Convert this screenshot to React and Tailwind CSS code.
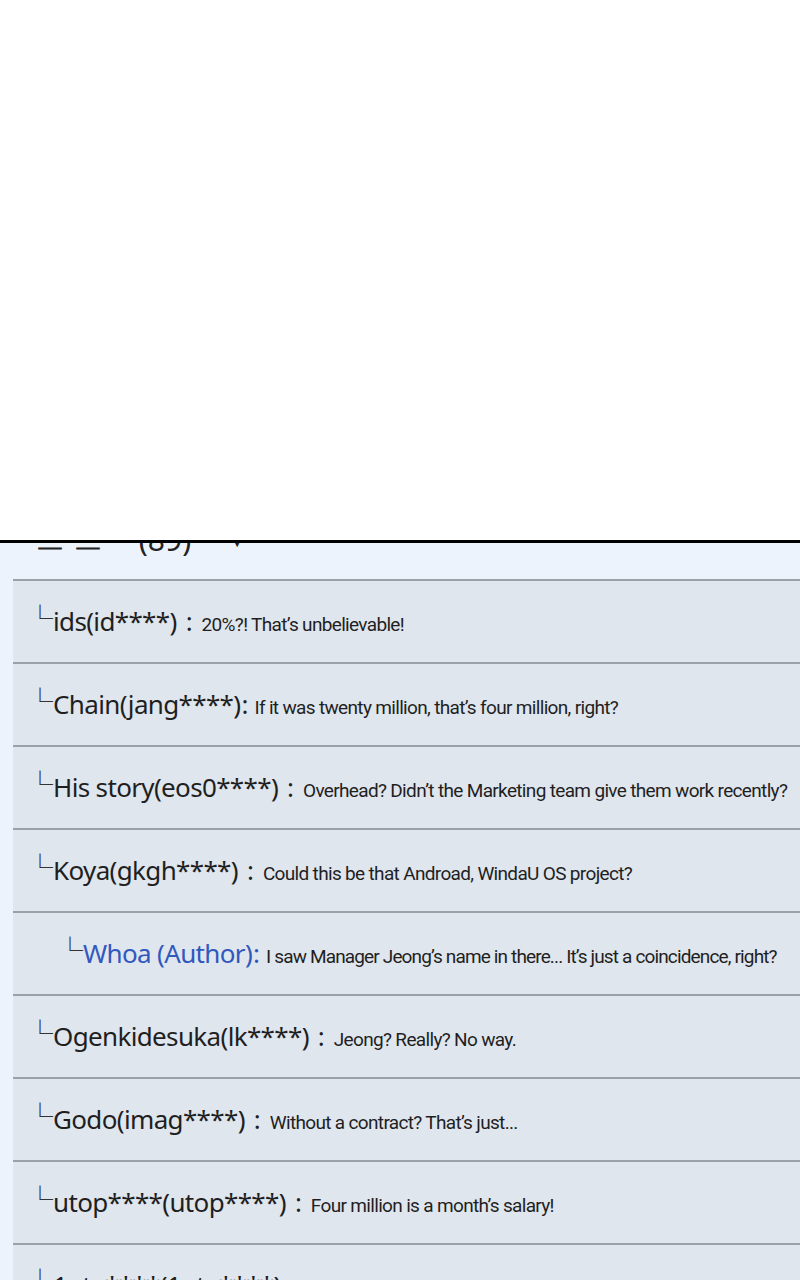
const comments = [
  { name: "ids(id****)", sep: "spaced", msg: "20%?! That’s unbelievable!" },
  { name: "Chain(jang****)", sep: "tight", msg: "If it was twenty million, that’s four million, right?" },
  { name: "His story(eos0****)", sep: "spaced", msg: "Overhead? Didn’t the Marketing team give them work recently?" },
  { name: "Koya(gkgh****)", sep: "spaced", msg: "Could this be that Androad, WindaU OS project?" },
  { name: "Whoa (Author)", sep: "tight", msg: "I saw Manager Jeong’s name in there... It’s just a coincidence, right?", author: true },
  { name: "Ogenkidesuka(lk****)", sep: "spaced", msg: "Jeong? Really? No way." },
  { name: "Godo(imag****)", sep: "spaced", msg: "Without a contract? That’s just..." },
  { name: "utop****(utop****)", sep: "spaced", msg: "Four million is a month’s salary!" },
  { name: "1ota****(1ota****)", sep: "spaced", msg: "" },
];

function Row({ c }) {
  const color = c.author ? "text-[#3158bd]" : "text-[#1f1f1f]";
  return (
    <div
      className={
        "h-[83px] border-t-2 border-[#9aa1a9] bg-[#dfe6ee] flex items-center whitespace-nowrap " +
        (c.author ? "pl-[44px]" : "pl-[14px]")
      }
    >
      <div className="flex items-baseline">
        <span className="text-[26px] leading-none text-[#333] font-['Noto_Sans_CJK_KR',sans-serif] relative top-[-3px]">
          └
        </span>
        <span className={"text-[26px] tracking-[-0.025em] font-['Noto_Sans',sans-serif] " + color}>
          {c.name}
        </span>
        <span
          className={
            "text-[26px] font-['Noto_Sans',sans-serif] " +
            color +
            (c.sep === "spaced" ? " ml-[9px] mr-[9px]" : " ml-[1px] mr-[6px]")
          }
        >
          :
        </span>
        <span
          className={
            "text-[19px] text-[#1f1f1f] font-['Roboto',sans-serif] " +
            (c.author ? "tracking-[-0.045em]" : "tracking-[-0.035em]")
          }
        >
          {c.msg}
        </span>
      </div>
    </div>
  );
}

export default function App() {
  return (
    <div className="w-[800px] h-[1280px] overflow-hidden bg-white">
      <div className="h-[540px] bg-white" />
      <div className="border-t-[3px] border-black bg-[#ecf3fc] pl-[13px]">
        <div className="h-[36px] overflow-hidden relative">
          <div className="absolute top-[-26px] left-[22px] flex items-center gap-[36px] text-[30px] text-[#222] font-['Noto_Sans',sans-serif] whitespace-nowrap">
            <span>ㅡ ㅡ</span>
            <span>(89)</span>
            <span className="text-[20px]">▼</span>
          </div>
        </div>
        {comments.map((c, i) => (
          <Row key={i} c={c} />
        ))}
      </div>
    </div>
  );
}
